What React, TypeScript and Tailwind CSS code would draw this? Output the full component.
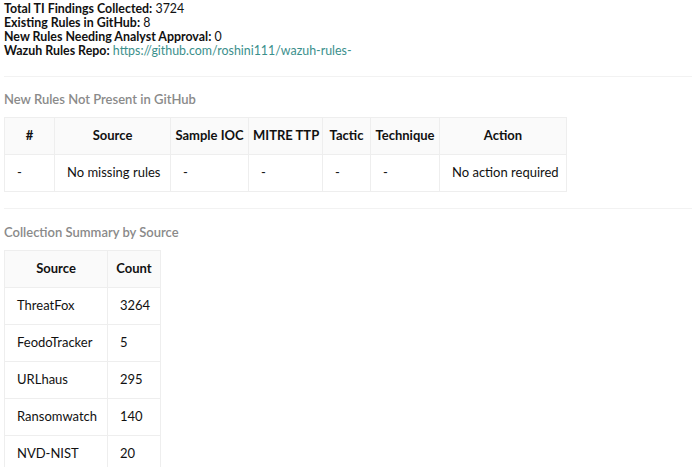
const missing = [
  { n: "-", source: "No missing rules", ioc: "-", ttp: "-", tactic: "-", tech: "-", action: "No action required" },
];

const summary = [
  { source: "ThreatFox", count: 3264 },
  { source: "FeodoTracker", count: 5 },
  { source: "URLhaus", count: 295 },
  { source: "Ransomwatch", count: 140 },
  { source: "NVD-NIST", count: 20 },
];

const th = "border border-[#eeeeee] bg-[#fafafa] font-bold px-[4px] h-[37px] text-center whitespace-nowrap";
const td = "border border-[#eeeeee] px-3 h-[37px] text-left whitespace-nowrap";

function Stat({ label, children }: { label: string; children: React.ReactNode }) {
  return (
    <div className="leading-[14px] text-[12.4px]">
      <span className="font-bold">{label}:</span> {children}
    </div>
  );
}

export default function App() {
  return (
    <div className="w-[700px] h-[467px] overflow-hidden bg-white text-[#111] text-[13px] px-1 pt-[2px]" style={{ fontFamily: 'Lato, sans-serif' }}>
      <Stat label="Total TI Findings Collected">3724</Stat>
      <Stat label="Existing Rules in GitHub">8</Stat>
      <Stat label="New Rules Needing Analyst Approval">0</Stat>
      <Stat label="Wazuh Rules Repo">
        <a className="text-[#3b8f8c]" href="#">https://github.com/roshini111/wazuh-rules-</a>
      </Stat>

      <hr className="mt-[18px] mb-[13px] border-t border-[#f2f2f2] mr-1" />
      <h3 className="text-[#8a8a8a] font-semibold text-[13px] leading-[18px] mb-[9px]">New Rules Not Present in GitHub</h3>
      <table className="border-collapse table-fixed w-[562px]">
        <colgroup>
          <col className="w-[50px]" />
          <col className="w-[116px]" />
          <col className="w-[78px]" />
          <col className="w-[74px]" />
          <col className="w-[48px]" />
          <col className="w-[69px]" />
          <col className="w-[127px]" />
        </colgroup>
        <thead>
          <tr>
            <th className={th}>#</th>
            <th className={th}>Source</th>
            <th className={th}>Sample IOC</th>
            <th className={th}>MITRE TTP</th>
            <th className={th}>Tactic</th>
            <th className={th}>Technique</th>
            <th className={th}>Action</th>
          </tr>
        </thead>
        <tbody>
          {missing.map((r, i) => (
            <tr key={i}>
              <td className={td}>{r.n}</td>
              <td className={td}>{r.source}</td>
              <td className={td}>{r.ioc}</td>
              <td className={td}>{r.ttp}</td>
              <td className={td}>{r.tactic}</td>
              <td className={td}>{r.tech}</td>
              <td className={td}>{r.action}</td>
            </tr>
          ))}
        </tbody>
      </table>

      <hr className="mt-[16px] mb-[14px] border-t border-[#f2f2f2] mr-1" />
      <h3 className="text-[#8a8a8a] font-semibold text-[13px] leading-[18px] mb-[9px]">Collection Summary by Source</h3>
      <table className="border-collapse table-fixed w-[156px]">
        <colgroup>
          <col className="w-[103px]" />
          <col className="w-[53px]" />
        </colgroup>
        <thead>
          <tr>
            <th className={th}>Source</th>
            <th className={th}>Count</th>
          </tr>
        </thead>
        <tbody>
          {summary.map((r) => (
            <tr key={r.source}>
              <td className={td}>{r.source}</td>
              <td className={td}>{r.count}</td>
            </tr>
          ))}
        </tbody>
      </table>
    </div>
  );
}
